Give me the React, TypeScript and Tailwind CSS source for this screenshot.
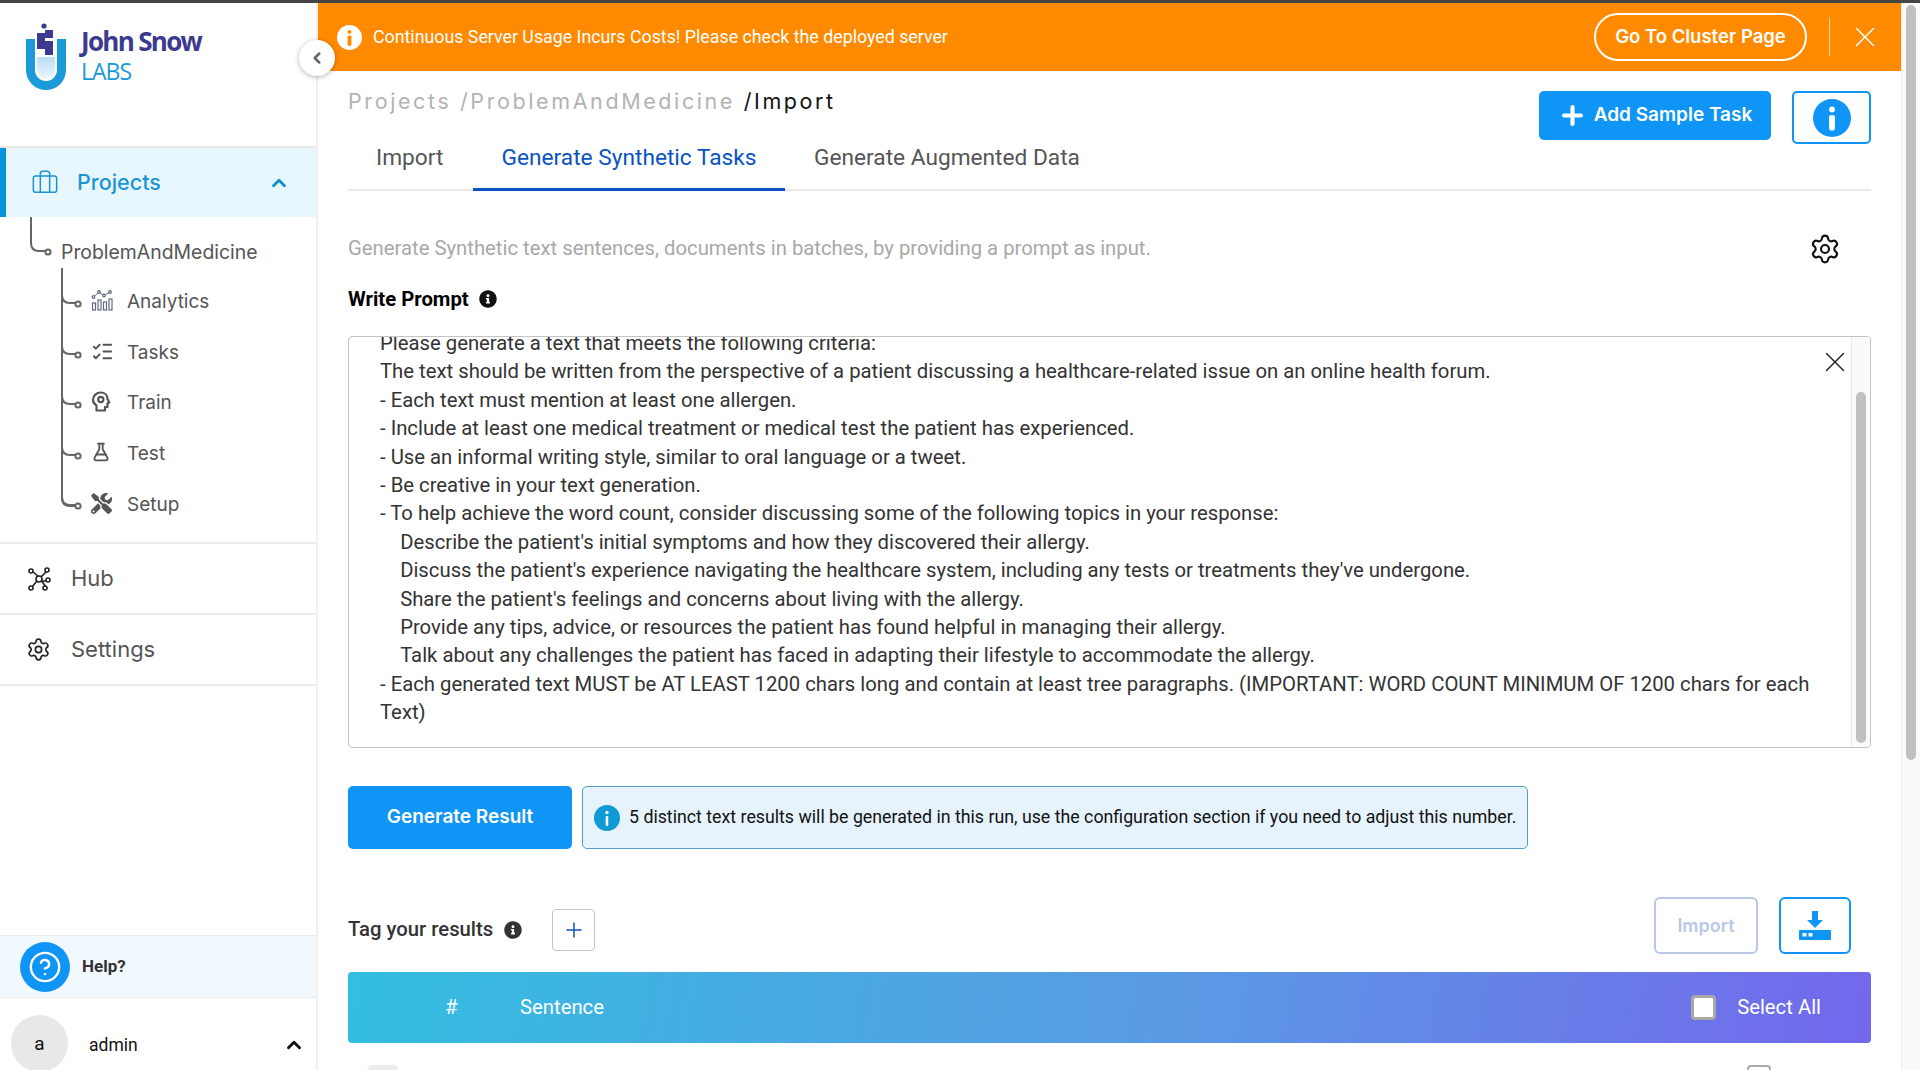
import { Briefcase, ChevronUp, ChevronLeft, X, Plus, ListChecks, FlaskConical, Settings, CircleHelp } from "lucide-react";
import { FaInfoCircle, FaTools } from "react-icons/fa";

const ROBOTO = "font-['Roboto',sans-serif]";
const MONT = "font-['Inter',sans-serif]";

function Logo() {
  return (
    <svg width="44" height="70" viewBox="0 0 44 70" className="shrink-0">
      <defs>
        <linearGradient id="lq" x1="0" y1="0" x2="0" y2="1">
          <stop offset="0" stopColor="#b9dcf3" />
          <stop offset="1" stopColor="#eef7fd" />
        </linearGradient>
      </defs>
      <path d="M2 16h9v31a11 11 0 0 0 22 0V16h9v31a20 20 0 0 1-40 0z" fill="#1b9ad9" />
      <path d="M13 34h18v13a9 9 0 0 1-18 0z" fill="url(#lq)" />
      <circle cx="20" cy="3" r="2.6" fill="#3b3a8e" />
      <rect x="13" y="10" width="8" height="8" fill="#3b3a8e" />
      <rect x="21" y="7" width="8" height="8" fill="#3b3a8e" />
      <rect x="13" y="18" width="16" height="8" fill="#3b3a8e" />
      <rect x="21" y="26" width="8" height="6" fill="#3b3a8e" />
    </svg>
  );
}

function RoundInfo({ size, bg, fg }: { size: number; bg: string; fg: string }) {
  return (
    <svg width={size} height={size} viewBox="0 0 26 26" className="shrink-0">
      <circle cx="13" cy="13" r="13" fill={bg} />
      <circle cx="13" cy="7.200" r="2" fill={fg} />
      <rect x="11" y="11" width="4" height="10.500" rx="1.300" fill={fg} />
    </svg>
  );
}

function AnalyticsIcon() {
  return (
    <svg width="22" height="22" viewBox="0 0 22 22" fill="none" stroke="#5f6b80" strokeWidth="1.2">
      <rect x="1.5" y="14" width="3" height="7" />
      <rect x="7" y="11" width="3" height="10" />
      <rect x="12.5" y="13" width="3" height="8" />
      <rect x="18" y="10" width="3" height="11" />
      <path d="M2.5 8 L8 3 L13 6.5 L19 3" strokeWidth="1" />
      <circle cx="2.5" cy="8" r="1.3" fill="#fff" />
      <circle cx="8" cy="3" r="1.3" fill="#fff" />
      <circle cx="13" cy="6.5" r="1.3" fill="#fff" />
      <circle cx="19" cy="3" r="1.3" fill="#fff" />
    </svg>
  );
}

function HeadIcon() {
  return (
    <svg width="20" height="21" viewBox="0 0 20 21" fill="none" stroke="#555" strokeWidth="2.200">
      <path d="M5.500 19.500h8.500v-3.500h2.500v-3.800l1.800-.7-1.800-3.500C16.500 4 13.500 1.500 9.800 1.500 5.500 1.500 2 4.800 2 8.800c0 2.400 1.300 4.400 3.500 5.700z" strokeLinejoin="round" />
      <circle cx="9.800" cy="8.500" r="2.600" />
    </svg>
  );
}

function HubIcon() {
  return (
    <svg width="24" height="24" viewBox="0 0 24 24" fill="none" stroke="#222" strokeWidth="1.6">
      <path d="M12 10 5 4M14 10l6-6M10 14l-5 6M14 14l7 0M14 13l5 7" />
      <circle cx="12" cy="12" r="3" fill="#fff" />
      <circle cx="4" cy="4" r="2" fill="#fff" />
      <circle cx="20" cy="3" r="2" fill="#fff" />
      <circle cx="4" cy="21" r="2" fill="#fff" />
      <circle cx="21" cy="13" r="2" fill="#fff" />
      <circle cx="18" cy="21" r="2" fill="#fff" />
    </svg>
  );
}

function TreeLines() {
  const ys = [304, 355, 405, 456, 506];
  return (
    <svg className="absolute left-0 top-[214px]" width="90" height="310" viewBox="0 217 90 310" fill="none" stroke="#666" strokeWidth="2">
      <path d="M31 217v26q0 8 8 8h6" />
      <circle cx="48" cy="252" r="2.600" fill="#fff" />
      <path d="M62 268V498q0 8 8 8h5" />
      {ys.map((y) => (
        <g key={y}>
          <path d={`M62 ${y - 9}q0 8 8 8h5`} />
          <circle cx="78" cy={y} r="2.600" fill="#fff" />
        </g>
      ))}
    </svg>
  );
}

function SubItem({ icon, label }: { icon: React.ReactNode; label: string }) {
  return (
    <div className="flex h-[50.700px] items-center pl-[91px]">
      <div className="flex w-[36px] items-center justify-start pb-1">{icon}</div>
      <span className={`${MONT} text-[19px] text-[#555]`}>{label}</span>
    </div>
  );
}

function Sidebar() {
  return (
    <aside className="relative flex h-full w-[318px] shrink-0 flex-col border-r-2 border-[#f0f0f0] bg-white">
      <div className="flex h-[145px] shrink-0 items-start gap-[13px] border-b-2 border-[#e8e8e8] pl-[24px] pt-[20px]">
        <Logo />
        <div className="pt-[3px] font-['Open_Sans',sans-serif]">
          <div className="text-[26px] leading-[30px] font-bold tracking-[-1.700px] text-[#3b3a8e]">John Snow</div>
          <div className="text-[23px] leading-[30px] tracking-[-1px] text-[#1b9ad9]">LABS</div>
        </div>
      </div>
      <div className="flex h-[69px] shrink-0 items-center border-l-[6px] border-[#0095d9] bg-[#e8f7fe] pl-[25px] pr-[26px] text-[#1b95d4]">
        <Briefcase size={28} strokeWidth={1.3} />
        <span className={`${MONT} ml-[18px] flex-1 text-[21.500px] font-medium`}>Projects</span>
        <ChevronUp size={22} strokeWidth={3} className="text-[#0a8fd0]" />
      </div>
      <TreeLines />
      <div className="flex h-[60px] shrink-0 items-center pl-[61px] pt-[12px]">
        <span className={`${MONT} text-[19.400px] text-[#555]`}>ProblemAndMedicine</span>
      </div>
      <div className="flex shrink-0 flex-col">
        <SubItem icon={<AnalyticsIcon />} label="Analytics" />
        <SubItem icon={<ListChecks size={23} strokeWidth={2} color="#555" />} label="Tasks" />
        <SubItem icon={<HeadIcon />} label="Train" />
        <SubItem icon={<FlaskConical size={20} strokeWidth={2.2} color="#555" />} label="Test" />
        <SubItem icon={<FaTools size={21} color="#555" />} label="Setup" />
      </div>
      <div className="mt-[12px] flex h-[73px] shrink-0 items-center gap-[20px] border-y-2 border-[#ececec] pl-[27px]">
        <HubIcon />
        <span className={`${MONT} text-[22px] text-[#555]`}>Hub</span>
      </div>
      <div className="flex h-[71px] shrink-0 items-center gap-[20px] border-b-2 border-[#ececec] pl-[26px]">
        <Settings size={25} strokeWidth={1.6} color="#222" />
        <span className={`${MONT} text-[22px] text-[#555]`}>Settings</span>
      </div>
      <div className="flex-1" />
      <div className="flex h-[63px] shrink-0 items-center border-y border-[#e8eef2] bg-[#f1f8fe] pl-[20px]">
        <div className="flex h-[50px] w-[50px] items-center justify-center rounded-full bg-[#0f95f5]">
          <CircleHelp size={34} strokeWidth={1.7} color="#fff" />
        </div>
        <span className={`${ROBOTO} ml-[12px] text-[17px] font-bold text-[#333]`}>Help?</span>
      </div>
      <div className="flex h-[72px] shrink-0 items-start pl-[11px] pt-[17px]">
        <div className="flex h-[57px] w-[57px] shrink-0 items-center justify-center rounded-full bg-[#e8e8e8] pt-[2px]">
          <span className={`${ROBOTO} text-[19px] text-[#111]`}>a</span>
        </div>
        <span className={`${ROBOTO} ml-[21px] flex-1 pt-[17px] text-[17.500px] text-[#111]`}>admin</span>
        <ChevronUp size={22} strokeWidth={3.2} color="#111" className="mr-[11px] mt-[19px]" />
      </div>
      <button className="absolute left-[299px] top-[37px] flex h-[36px] w-[36px] items-center justify-center rounded-full bg-white shadow-[0_1px_5px_rgba(0,0,0,0.3)]">
        <ChevronLeft size={18} strokeWidth={3.4} color="#666" />
      </button>
    </aside>
  );
}

function Banner() {
  return (
    <div className="flex h-[68px] shrink-0 items-center bg-[#ff8a00] pl-[19px] pr-[19px] text-white">
      <RoundInfo size={25} bg="#fff" fg="#ff8a00" />
      <span className={`${ROBOTO} ml-[11px] flex-1 text-[17.800px]`}>Continuous Server Usage Incurs Costs! Please check the deployed server</span>
      <button className={`${MONT} flex h-[48px] w-[213px] items-center justify-center rounded-full border-2 border-white text-[18.500px] font-semibold`}>Go To Cluster Page</button>
      <div className="ml-[22px] h-[38px] w-px bg-[#ffd9a8]" />
      <X size={34} strokeWidth={1} className="ml-[18px]" />
    </div>
  );
}

const LINES: string[] = [
  "Please generate a text that meets the following criteria:",
  "The text should be written from the perspective of a patient discussing a healthcare-related issue on an online health forum.",
  "- Each text must mention at least one allergen.",
  "- Include at least one medical treatment or medical test the patient has experienced.",
  "- Use an informal writing style, similar to oral language or a tweet.",
  "- Be creative in your text generation.",
  "- To help achieve the word count, consider discussing some of the following topics in your response:",
  "    Describe the patient's initial symptoms and how they discovered their allergy.",
  "    Discuss the patient's experience navigating the healthcare system, including any tests or treatments they've undergone.",
  "    Share the patient's feelings and concerns about living with the allergy.",
  "    Provide any tips, advice, or resources the patient has found helpful in managing their allergy.",
  "    Talk about any challenges the patient has faced in adapting their lifestyle to accommodate the allergy.",
  "- Each generated text MUST be AT LEAST 1200 chars long and contain at least tree paragraphs. (IMPORTANT: WORD COUNT MINIMUM OF 1200 chars for each Text)",
];

function PromptBox() {
  return (
    <div className="relative mt-[25px] flex h-[412px] shrink-0 overflow-hidden rounded-[4px] border border-[#c4c4c4] bg-white">
      <div className={`${ROBOTO} min-w-0 flex-1 overflow-hidden pl-[31px] pr-[35px] text-[20.300px] leading-[28.400px] text-[#333]`}>
        <div className="mt-[-8px] whitespace-pre-wrap">
          {LINES.map((l) => (
            <div key={l.slice(0, 24)}>{l}</div>
          ))}
        </div>
      </div>
      <div className="flex w-[19px] shrink-0 flex-col border-l border-[#e8e8e8] bg-[#fafafa] px-[4px] pb-[4px] pt-[55px]">
        <div className="flex-1 rounded-full bg-[#c0c0c0]" />
      </div>
      <X size={34} strokeWidth={1} color="#222" className="absolute right-[18px] top-[8px]" />
    </div>
  );
}

function Main() {
  return (
    <div className="flex min-w-0 flex-1 flex-col overflow-hidden pl-[30px] pr-[30px]">
      <div className="flex h-[119px] shrink-0 items-start justify-between">
        <div className={`${MONT} mt-[14px] text-[21.500px] tracking-[2.600px]`}>
          <span className="text-[#b3b3b3]">Projects /ProblemAndMedicine</span>
          <span className="text-[#111]"> /Import</span>
        </div>
        <div className="flex items-start gap-[21px] pt-[20px]">
          <button className={`${MONT} flex h-[49px] w-[232px] items-center justify-center gap-[7px] rounded-[5px] bg-[#0f95f5] text-[19px] font-semibold text-white`}>
            <Plus size={29} strokeWidth={3.4} />
            Add Sample Task
          </button>
          <button className="flex h-[53px] w-[79px] items-center justify-center rounded-[5px] border-2 border-[#0f95f5] bg-white">
            <RoundInfo size={38} bg="#0f95f5" fg="#fff" />
          </button>
        </div>
      </div>
      <div className={`${ROBOTO} mt-[-49px] flex h-[50px] shrink-0 border-b-2 border-[#e8e8e8] text-[22.700px] text-[#555]`}>
        <div className="flex h-[50px] w-[125px] items-start justify-start pl-[28px]">Import</div>
        <div className="flex h-[50px] w-[312px] items-start justify-center border-b-[3px] border-[#0a52c4] text-[#0a52c4]">Generate Synthetic Tasks</div>
        <div className="flex h-[50px] items-start pl-[29px]">Generate Augmented Data</div>
      </div>
      <div className={`${ROBOTO} mt-[32px] flex h-[50px] shrink-0 items-center justify-between text-[20.300px] text-[#a8a8a8]`}>
        <span>Generate Synthetic text sentences, documents in batches, by providing a prompt as input.</span>
        <Settings size={32} strokeWidth={1.6} color="#111" className="mr-[30px] mt-[2px]" />
      </div>
      <div className={`${ROBOTO} mt-[14px] flex h-[24px] shrink-0 items-center gap-[10px] text-[20.300px] font-bold text-black`}>
        Write Prompt
        <FaInfoCircle size={18} color="#111" />
      </div>
      <PromptBox />
      <div className="mt-[38px] flex h-[63px] shrink-0 gap-[10px]">
        <button className={`${MONT} w-[224px] rounded-[5px] bg-[#0f95f5] text-[19px] font-semibold text-white`}>Generate Result</button>
        <div className="flex w-[946px] items-center rounded-[5px] border border-[#4f9fc4] bg-[#e6f3fc] pl-[11px]">
          <svg width="26" height="26" viewBox="0 0 26 26" className="shrink-0">
            <circle cx="13" cy="13" r="13" fill="#0f9ad6" />
            <circle cx="13" cy="7.500" r="1.700" fill="#fff" />
            <rect x="11.700" y="11" width="2.600" height="10" rx="1.200" fill="#fff" />
          </svg>
          <span className={`${ROBOTO} ml-[9px] whitespace-nowrap text-[17.750px] text-[#111]`}>5 distinct text results will be generated in this run, use the configuration section if you need to adjust this number.</span>
        </div>
      </div>
      <div className="mt-[48px] flex h-[57px] shrink-0 items-center justify-between pr-[20px]">
        <div className={`${ROBOTO} mt-[8px] flex items-center text-[20.300px] font-medium text-[#333]`}>
          Tag your results
          <FaInfoCircle size={18} color="#333" className="ml-[11px]" />
          <button className="ml-[30px] flex h-[42px] w-[43px] items-center justify-center rounded-[4px] border border-[#c4c4c4] bg-white">
            <Plus size={24} strokeWidth={1.5} color="#0a52c4" />
          </button>
        </div>
        <div className="flex gap-[21px]">
          <button className={`${MONT} h-[57px] w-[104px] rounded-[6px] border-[2.500px] border-[#b9c8e6] text-[18px] font-semibold text-[#b9c8e6]`}>Import</button>
          <button className="flex h-[57px] w-[72px] items-center justify-center rounded-[6px] border-2 border-[#0f95f5] bg-white">
            <svg width="34" height="30" viewBox="0 0 34 30" fill="#0f95f5">
              <path d="M14 0h6v9h5L17 17 9 9h5z" />
              <rect x="1" y="19" width="32" height="10" rx="1" />
              <rect x="4.500" y="22" width="4" height="3.500" fill="#fff" />
              <rect x="10.500" y="22" width="4" height="3.500" fill="#fff" />
            </svg>
          </button>
        </div>
      </div>
      <div className={`${ROBOTO} mt-[18px] flex h-[71px] shrink-0 items-center rounded-[4px] bg-[linear-gradient(100deg,#33bee0,#5a99e4_55%,#7367ec)] text-[20.300px] text-white`}>
        <span className="ml-[97px] w-[75px]">#</span>
        <span className="flex-1">Sentence</span>
        <span className="h-[25px] w-[25px] rounded-[4px] border-[3px] border-[#a8a8a8] bg-white" />
        <span className="ml-[21px] mr-[50px]">Select All</span>
      </div>
      <div className="mt-[22px] flex h-[10px] shrink-0 justify-between pl-[19px] pr-[100px]">
        <div className="h-[30px] w-[32px] rounded-[6px] bg-[#ececec]" />
        <div className="h-[30px] w-[24px] rounded-[4px] border-2 border-[#aaa] bg-white" />
      </div>
    </div>
  );
}

export default function App() {
  return (
    <div className="flex h-[1070px] w-[1920px] flex-col overflow-hidden bg-white">
      <div className="h-[3px] shrink-0 bg-[#454545]" />
      <div className="flex min-h-0 flex-1">
        <Sidebar />
        <div className="flex min-w-0 flex-1 flex-col">
          <Banner />
          <Main />
        </div>
        <div className="flex w-[19px] shrink-0 flex-col border-l border-[#ececec] bg-[#fafafa] px-[4px] pt-[2px]">
          <div className="h-[755px] rounded-full bg-[#c0c0c0]" />
        </div>
      </div>
    </div>
  );
}
